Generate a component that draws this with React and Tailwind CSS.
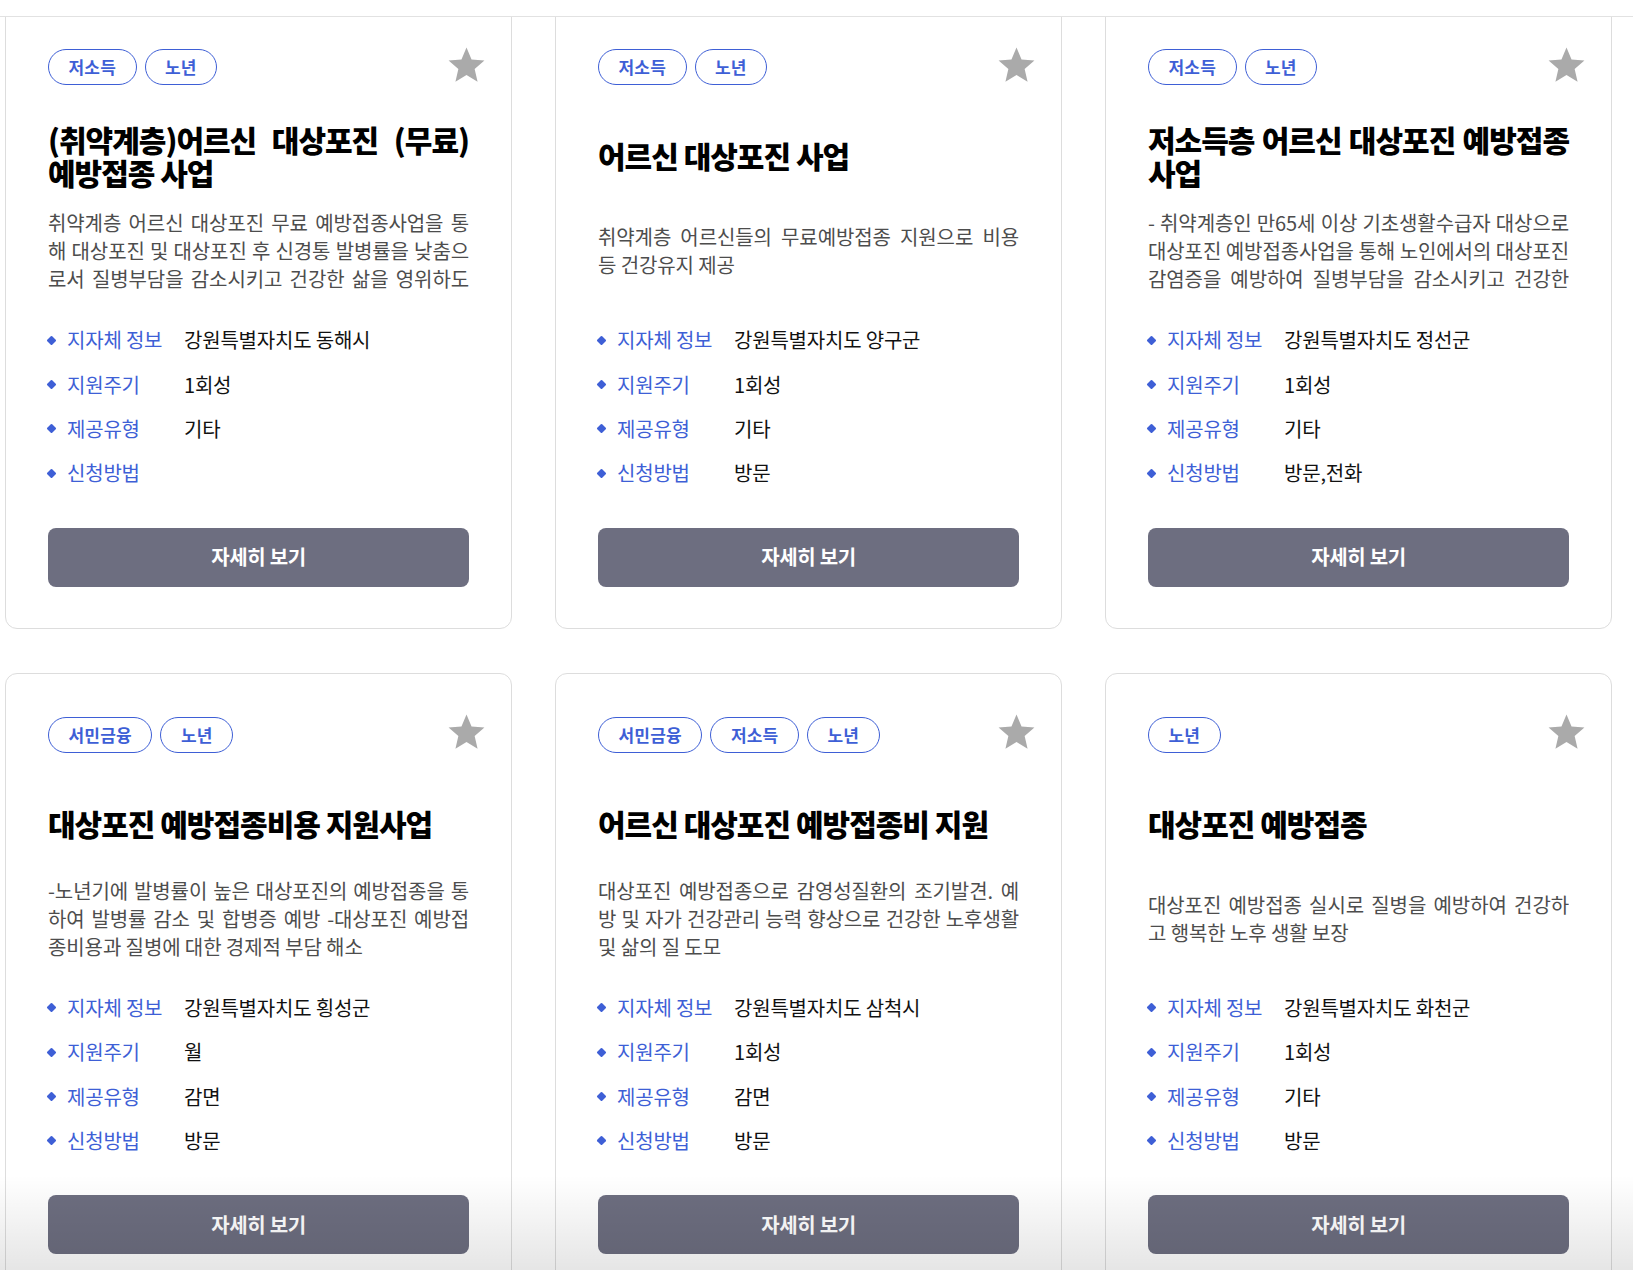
import React from 'react';

const cards = [
    {
        tags: ['저소득', '노년'],
        title: '(취약계층)어르신 대상포진 (무료) 예방접종 사업',
        desc: '취약계층 어르신 대상포진 무료 예방접종사업을 통해 대상포진 및 대상포진 후 신경통 발병률을 낮춤으로서 질병부담을 감소시키고 건강한 삶을 영위하도록 함',
        region: '강원특별자치도 동해시',
        cycle: '1회성',
        type: '기타',
        method: '',
    },
    {
        tags: ['저소득', '노년'],
        title: '어르신 대상포진 사업',
        desc: '취약계층 어르신들의 무료예방접종 지원으로 비용 등 건강유지 제공',
        region: '강원특별자치도 양구군',
        cycle: '1회성',
        type: '기타',
        method: '방문',
    },
    {
        tags: ['저소득', '노년'],
        title: '저소득층 어르신 대상포진 예방접종 사업',
        desc: '- 취약계층인 만65세 이상 기초생활수급자 대상으로 대상포진 예방접종사업을 통해 노인에서의 대상포진 감염증을 예방하여 질병부담을 감소시키고 건강한 삶을 영위하도록 함',
        region: '강원특별자치도 정선군',
        cycle: '1회성',
        type: '기타',
        method: '방문,전화',
    },
    {
        tags: ['서민금융', '노년'],
        title: '대상포진 예방접종비용 지원사업',
        desc: '-노년기에 발병률이 높은 대상포진의 예방접종을 통하여 발병률 감소 및 합병증 예방 -대상포진 예방접종비용과 질병에 대한 경제적 부담 해소',
        region: '강원특별자치도 횡성군',
        cycle: '월',
        type: '감면',
        method: '방문',
    },
    {
        tags: ['서민금융', '저소득', '노년'],
        title: '어르신 대상포진 예방접종비 지원',
        desc: '대상포진 예방접종으로 감영성질환의 조기발견. 예방 및 자가 건강관리 능력 향상으로 건강한 노후생활 및 삶의 질 도모',
        region: '강원특별자치도 삼척시',
        cycle: '1회성',
        type: '감면',
        method: '방문',
    },
    {
        tags: ['노년'],
        title: '대상포진 예방접종',
        desc: '대상포진 예방접종 실시로 질병을 예방하여 건강하고 행복한 노후 생활 보장',
        region: '강원특별자치도 화천군',
        cycle: '1회성',
        type: '기타',
        method: '방문',
    },
];

const font = { fontFamily: '"Noto Sans CJK KR", "Noto Sans", sans-serif' };

function Star() {
    return (
        <svg viewBox="0 0 24 24" className="w-[43px] h-[43px] fill-[#aaaaaa]">
            <path d="M12 17.27L18.18 21l-1.64-7.03L22 9.24l-7.19-.61L12 2 9.19 8.63 2 9.24l5.46 4.73L5.82 21z" />
        </svg>
    );
}

function InfoRow({ label, value }) {
    return (
        <li className="h-[44.4px] flex items-center">
            <span className="w-[7px] h-[7px] bg-[#3e5fd6] rotate-45 rounded-[1px] mr-[12px]" />
            <span className="w-[117px] text-[20px] tracking-[-0.2px] text-[#3e5fd6]">{label}</span>
            <span className="text-[20px] tracking-[-0.2px] text-[#111111]">{value}</span>
        </li>
    );
}

function Card({ card }) {
    return (
        <div className="bg-white border border-[#dddddd] rounded-xl pt-[43px] pb-[41px] px-[42px] flex flex-col">
            {/* tags + favourite */}
            <div className="flex items-center justify-between h-[36px]">
                <div className="flex gap-[8px]">
                    {card.tags.map((t) => (
                        <span
                            key={t}
                            className="h-[36px] px-[19.5px] flex items-center rounded-full border border-[#3e5fd6] text-[#3e5fd6] text-[17px] font-semibold tracking-[0.2px]"
                        >
                            {t}
                        </span>
                    ))}
                </div>
                <div className="-mr-[19px] -mt-[4px]">
                    <Star />
                </div>
            </div>

            {/* title */}
            <div className="mt-[26px] h-[89px] flex items-center">
                <h3 className="w-full text-[30px] leading-[33px] font-black tracking-[-1px] text-black text-justify break-keep">
                    {card.title}
                </h3>
            </div>

            {/* description, cut after three lines */}
            <div className="h-[102px] flex items-center">
                <p className="w-full max-h-[84px] overflow-hidden text-[20px] leading-[28px] tracking-[-0.1px] text-[#4d4d4d] text-justify break-all">
                    {card.desc}
                </p>
            </div>

            <ul className="mt-[16px]">
                <InfoRow label="지자체 정보" value={card.region} />
                <InfoRow label="지원주기" value={card.cycle} />
                <InfoRow label="제공유형" value={card.type} />
                <InfoRow label="신청방법" value={card.method} />
            </ul>

            <button className="mt-[32px] h-[59px] w-full rounded-lg bg-[#6d6e80] text-white text-[20px] font-bold tracking-[-0.3px]">
                자세히 보기
            </button>
        </div>
    );
}

export default function App() {
    return (
        <div className="relative h-[1270px] overflow-hidden bg-white" style={font}>
            <div className="pt-[5px] pl-[5px] grid grid-cols-[507px_507px_507px] gap-x-[43px] gap-y-[44px]">
                {cards.map((c, i) => (
                    <Card key={i} card={c} />
                ))}
            </div>

            {/* sticky header edge */}
            <div className="absolute top-0 left-0 right-0 h-[17px] bg-white border-b border-[#e2e2e2]" />

            {/* bottom fade */}
            <div className="absolute bottom-0 left-0 right-0 h-[95px] bg-gradient-to-b from-transparent to-black/10 pointer-events-none" />
        </div>
    );
}
